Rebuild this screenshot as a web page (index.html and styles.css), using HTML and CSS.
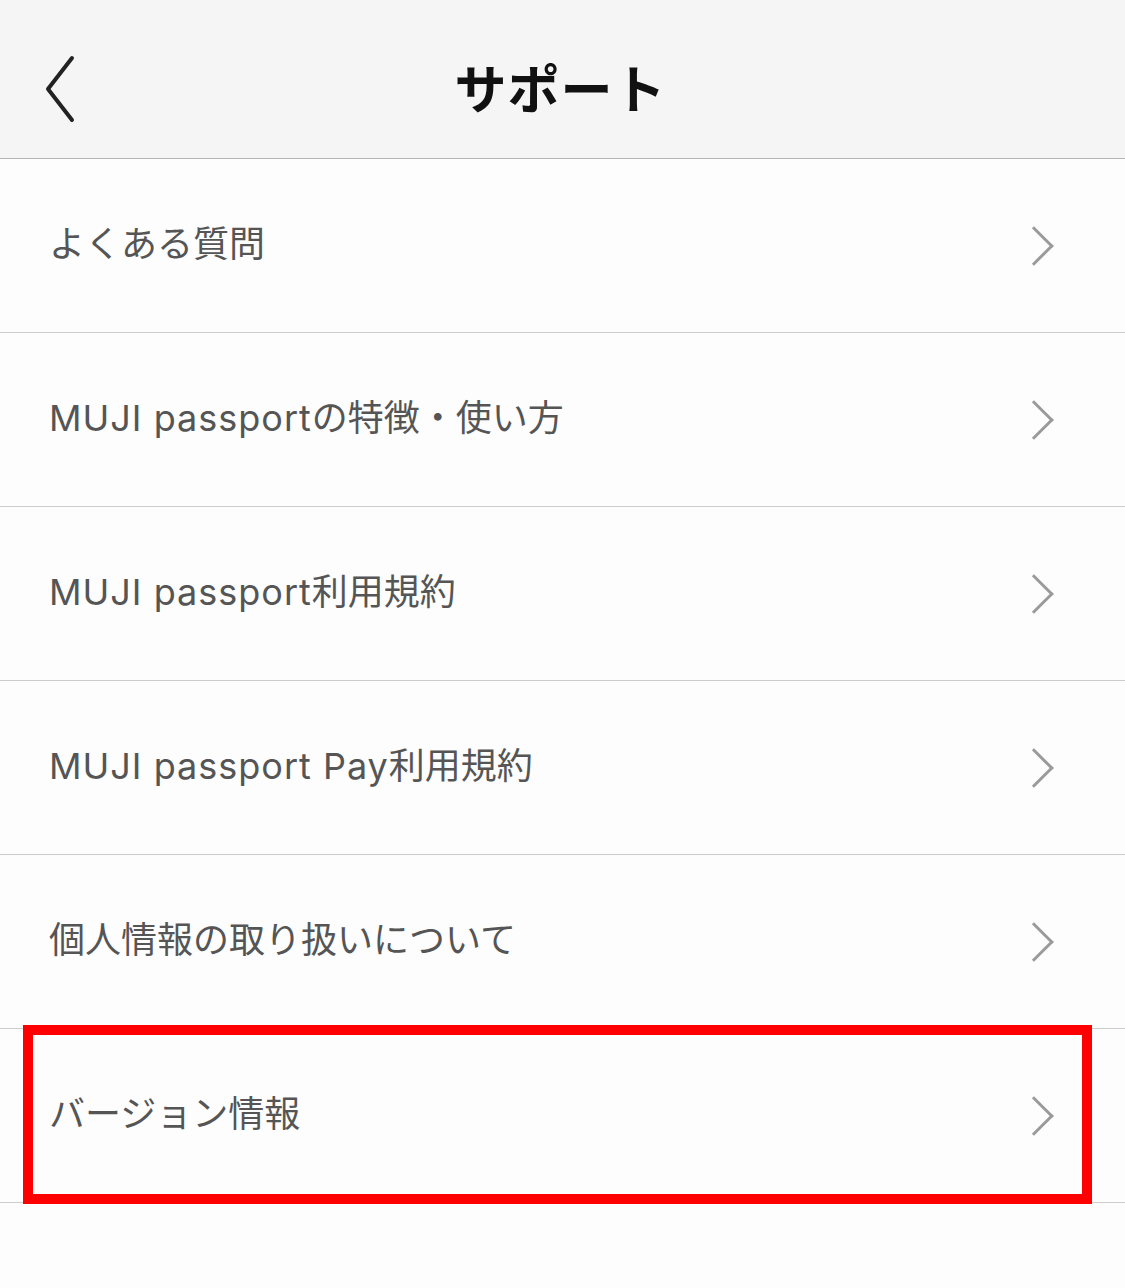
FILE: index.html
```html
<!DOCTYPE html>
<html lang="ja">
<head>
    <meta charset="UTF-8">
    <meta name="viewport" content="width=device-width, initial-scale=1.0">
    <title>サポート</title>
    <link rel="stylesheet" href="styles.css">
</head>
<body>
    <header class="nav-bar">
        <a class="back-btn" href="#">
            <svg width="30" height="68" viewBox="0 0 30 68">
                <path d="M26 3 L2 34 L26 65" fill="none" stroke="#222" stroke-width="4" stroke-linecap="round" stroke-linejoin="round"/>
            </svg>
        </a>
        <h1 class="nav-title">サポート</h1>
    </header>

    <ul class="menu-list">
        <li class="menu-item"><span class="menu-label">よくある質問</span><span class="chevron"></span></li>
        <li class="menu-item"><span class="menu-label"><span class="latin">MUJI passport</span>の特徴・使い方</span><span class="chevron"></span></li>
        <li class="menu-item"><span class="menu-label"><span class="latin">MUJI passport</span>利用規約</span><span class="chevron"></span></li>
        <li class="menu-item"><span class="menu-label"><span class="latin">MUJI passport Pay</span>利用規約</span><span class="chevron"></span></li>
        <li class="menu-item"><span class="menu-label">個人情報の取り扱いについて</span><span class="chevron"></span></li>
        <li class="menu-item highlighted"><span class="menu-label">バージョン情報</span><span class="chevron"></span></li>
    </ul>
</body>
</html>
```

FILE: styles.css
```css
* {
    margin: 0;
    padding: 0;
    box-sizing: border-box;
}
body {
    min-height: 100vh;
    background: #fdfdfd;
    font-family: "Inter", "Noto Sans CJK JP", sans-serif;
}
.nav-bar {
    height: 159px;
    background: #f5f5f5;
    border-bottom: 1px solid #b4b4b4;
    display: flex;
    align-items: center;
    justify-content: center;
    position: relative;
}
.back-btn {
    position: absolute;
    left: 46px;
    top: 55px;
    display: block;
}
.back-btn svg {
    display: block;
    overflow: visible;
}
.nav-title {
    font-family: "Noto Sans CJK JP", sans-serif;
    font-size: 52px;
    font-weight: 700;
    color: #111;
    letter-spacing: 1px;
    margin-top: 14px;
    margin-left: -4px;
}
.menu-list {
    list-style: none;
}
.menu-item {
    height: 174px;
    border-bottom: 1px solid #cdcdcd;
    display: flex;
    align-items: center;
    justify-content: space-between;
    padding: 0 73px 0 49px;
    position: relative;
}
.menu-label {
    font-size: 36px;
    color: #555;
    line-height: 1;
    margin-top: -4px;
}
.latin {
    letter-spacing: 1px;
}
.chevron {
    width: 28px;
    height: 28px;
    border-top: 3px solid #9a9a9a;
    border-right: 3px solid #9a9a9a;
    transform: rotate(45deg);
    margin-right: 4px;
}
/* 强调框 */
.highlighted::after {
    content: "";
    position: absolute;
    left: 23px;
    right: 33px;
    top: -4px;
    bottom: -2px;
    border: 10px solid #ff0000;
    pointer-events: none;
}
```
